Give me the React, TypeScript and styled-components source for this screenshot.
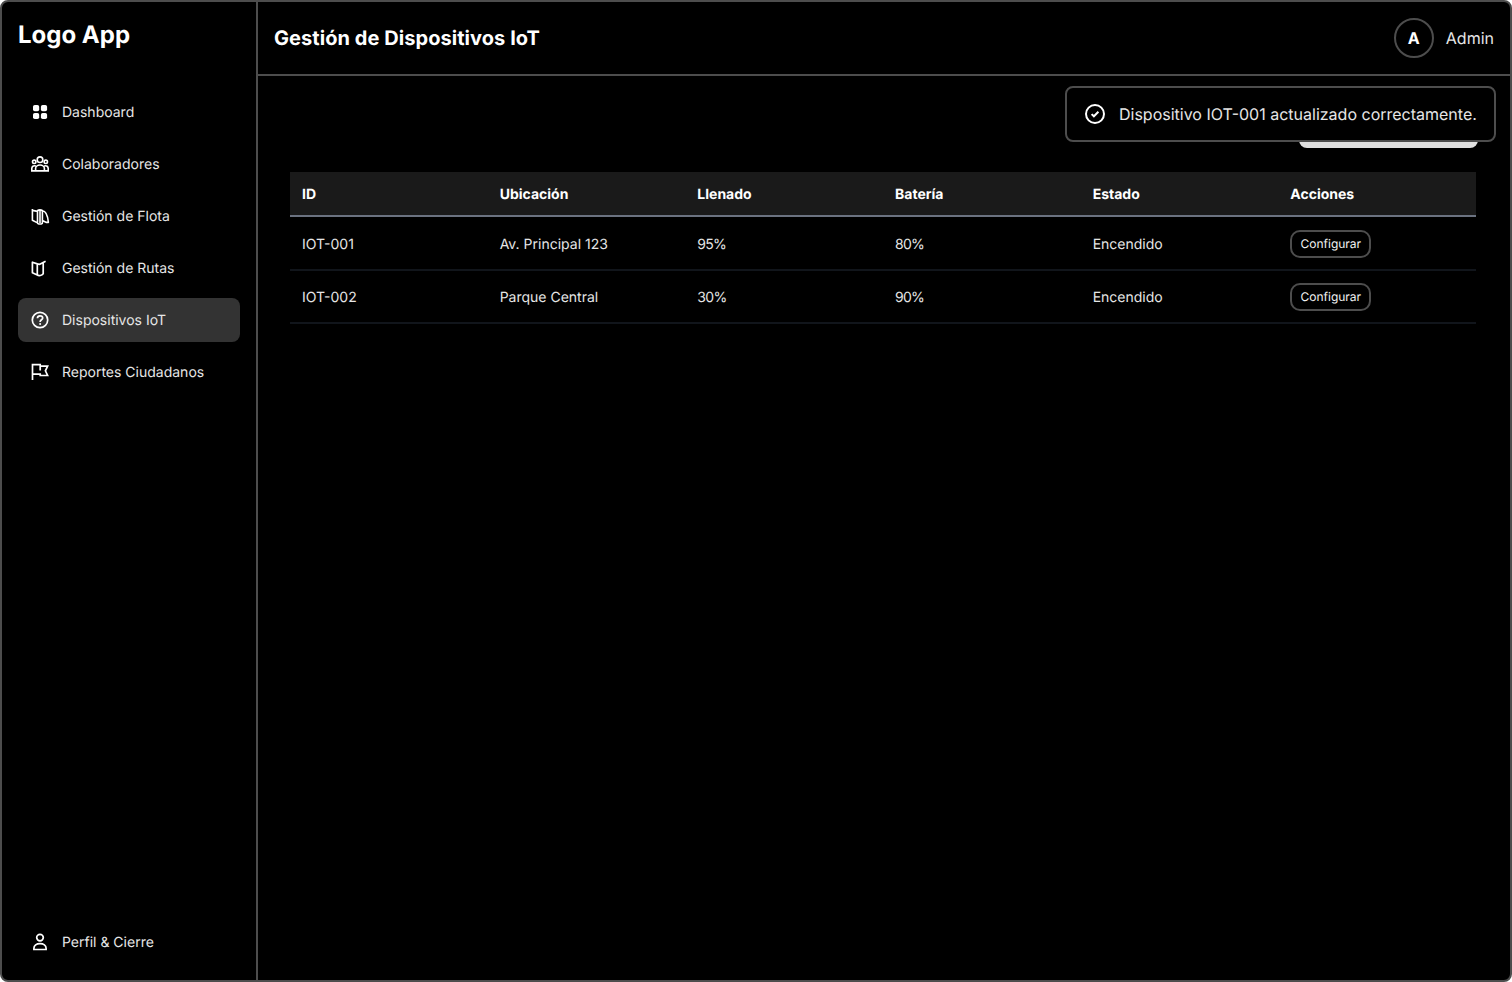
import React from "react";
import styled, { createGlobalStyle } from "styled-components";

const GlobalStyle = createGlobalStyle`
  *, *::before, *::after { box-sizing: border-box; }
  html, body { margin: 0; background: #fff; }
  body {
    font-family: Inter, "Liberation Sans", sans-serif;
    color: #fff;
    text-rendering: geometricPrecision;
    -webkit-font-smoothing: antialiased;
  }
`;

const line = "#4d4d4d";

const Shell = styled.div`
  position: relative;
  display: flex;
  width: 1512px;
  height: 982px;
  border: 2px solid ${line};
  border-radius: 8px;
  background: #000;
  overflow: hidden;
`;

const Sidebar = styled.aside`
  flex: none;
  display: flex;
  flex-direction: column;
  width: 256px;
  padding: 16px;
  border-right: 2px solid ${line};
`;

const Logo = styled.div`
  height: 72px;
  font-size: 24px;
  line-height: 34px;
  font-weight: 700;
`;

const Nav = styled.nav`
  flex: 1;
  display: flex;
  flex-direction: column;
  gap: 8px;
`;

const NavItem = styled.a<{ $active?: boolean }>`
  display: flex;
  align-items: center;
  gap: 12px;
  height: 44px;
  padding: 0 12px;
  border-radius: 8px;
  background: ${(p) => (p.$active ? "#333" : "transparent")};
  color: #e6e6e6;
  font-size: 14px;
  line-height: 21px;
  white-space: nowrap;
`;

const Icon = styled.svg`
  flex: none;
  width: 20px;
  height: 20px;
  fill: none;
  stroke: #fff;
  stroke-width: 1.7;
`;

const Main = styled.main`
  flex: 1;
  display: flex;
  flex-direction: column;
  min-width: 0;
`;

const Header = styled.header`
  display: flex;
  align-items: center;
  justify-content: space-between;
  height: 74px;
  padding: 0 16px;
  border-bottom: 2px solid ${line};
`;

const Title = styled.h1`
  margin: 0;
  font-size: 20px;
  line-height: 28px;
  font-weight: 700;
  letter-spacing: 0.06px;
`;

const User = styled.div`
  display: flex;
  align-items: center;
  gap: 12px;
  color: #e6e6e6;
  font-size: 16px;
  line-height: 24px;
`;

const Avatar = styled.span`
  display: flex;
  align-items: center;
  justify-content: center;
  width: 40px;
  height: 40px;
  border: 2px solid ${line};
  border-radius: 50%;
  color: #fff;
  font-weight: 700;
`;

const Content = styled.section`
  display: flex;
  flex-direction: column;
  gap: 24px;
  padding: 32px 34px 32px 32px;
`;

const Actions = styled.div`
  display: flex;
  justify-content: flex-end;
  margin-right: -2px;
`;

const AddButton = styled.button`
  width: 179px;
  height: 40px;
  border: 0;
  border-radius: 8px;
  background: #e0e0e0;
`;

const Table = styled.div`
  display: flex;
  flex-direction: column;
  font-size: 14px;
  line-height: 21px;
`;

const HeadRow = styled.div`
  display: grid;
  grid-template-columns: repeat(6, 1fr);
  align-items: center;
  height: 45px;
  padding-top: 1px;
  border-bottom: 2px solid #6b7280;
  background: #1a1a1a;
  font-weight: 700;
`;

const Row = styled.div<{ $first?: boolean }>`
  display: grid;
  grid-template-columns: repeat(6, 1fr);
  align-items: center;
  padding: ${(p) => (p.$first ? 13 : 12)}px 0 11px;
  border-bottom: 2px solid #11151b;
  color: #e6e6e6;
`;

const Cell = styled.div<{ $tight?: boolean }>`
  display: flex;
  padding: 0 12px;
  letter-spacing: ${(p) => (p.$tight ? "-0.7px" : "normal")};
`;

const ConfigButton = styled.button`
  width: 81px;
  height: 28px;
  padding: 0;
  border: 2px solid ${line};
  border-radius: 10px;
  background: #000;
  color: #f2f2f2;
  font: 400 12px/16px Inter, "Liberation Sans", sans-serif;
  text-rendering: geometricPrecision;
`;

const Toast = styled.div`
  position: absolute;
  top: 84px;
  right: 14px;
  display: flex;
  align-items: center;
  gap: 12px;
  width: 431px;
  height: 56px;
  padding: 0 16px;
  border: 2px solid ${line};
  border-radius: 8px;
  background: #000;
  color: #e6e6e6;
  font-size: 16px;
  line-height: 24px;
  white-space: nowrap;
`;

const ToastIcon = styled(Icon)`
  width: 24px;
  height: 24px;
  stroke-width: 2;
`;

const icons = {
  dashboard: (
    <g fill="#fff" stroke="none">
      <rect x="3" y="3" width="6.2" height="6.2" rx="1.8" />
      <rect x="10.9" y="3" width="6.2" height="6.2" rx="1.8" />
      <rect x="3" y="10.9" width="6.2" height="6.2" rx="1.8" />
      <rect x="10.9" y="10.9" width="6.2" height="6.2" rx="1.8" />
    </g>
  ),
  people: (
    <g strokeWidth="1.6">
      <circle cx="10" cy="5.7" r="2.8" />
      <circle cx="4.2" cy="7.8" r="1.7" />
      <circle cx="15.8" cy="7.8" r="1.7" />
      <path d="M5.6 16.9v-2.3a4.4 3.6 0 0 1 8.8 0v2.3M5.8 12c-2.5-.7-4 .5-4 2.5v2.4h16.4v-2.4c0-2-1.5-3.2-4-2.5" />
    </g>
  ),
  fleet: (
    <path
      strokeWidth="1.6"
      strokeLinejoin="round"
      d="M2.4 2.9v11.3l5.1 2.7V5.4L2.4 4.4M7.5 5.4c0-2 4.9-2 4.9 0v11.3c0 1.8-4.9 1.8-4.9 0M10 4v13M12.4 4.8c3 .2 5.3 4.6 6 11.6h-2l-4-1.8"
    />
  ),
  routes: (
    <path
      strokeWidth="1.7"
      strokeLinejoin="round"
      d="M2.4 4.2v10.6l4.9 2.3V5.9L2.4 4.2ZM7.3 5.9l2.5.4 5.8-3M7.3 17.1c1.5.9 4.5.6 5.9-1.3V5"
    />
  ),
  help: (
    <>
      <circle cx="10" cy="10" r="7.7" />
      <path d="M7.4 8.2C7.5 6.7 8.5 5.9 10 5.9s2.7.8 2.7 2.1c0 1.7-2.6 1.9-2.6 3.9" />
      <circle cx="10.1" cy="13.9" r="1" fill="#fff" stroke="none" />
    </>
  ),
  flag: <path d="M2.5 18V2.6h7.7v1.5h7.4l-2.2 4.7 2.2 4.7h-7.4v-1.4H2.5M10.2 4v4.4" />,
  person: (
    <>
      <circle cx="10" cy="5.6" r="3.3" />
      <path d="M3.9 17.5v-1.2c0-2.8 2.6-4.7 6.1-4.7s6.1 1.9 6.1 4.7v1.2Z" />
    </>
  ),
};

type IconName = keyof typeof icons;

const Glyph = ({ name }: { name: IconName }) => <Icon viewBox="0 0 20 20">{icons[name]}</Icon>;

const links: [IconName, string][] = [
  ["dashboard", "Dashboard"],
  ["people", "Colaboradores"],
  ["fleet", "Gestión de Flota"],
  ["routes", "Gestión de Rutas"],
  ["help", "Dispositivos IoT"],
  ["flag", "Reportes Ciudadanos"],
];

const columns = ["ID", "Ubicación", "Llenado", "Batería", "Estado", "Acciones"];

const devices = [
  ["IOT-001", "Av. Principal 123", "95%", "80%", "Encendido"],
  ["IOT-002", "Parque Central", "30%", "90%", "Encendido"],
];

export default function App() {
  return (
    <>
      <GlobalStyle />
      <Shell>
        <Sidebar>
          <Logo>Logo App</Logo>
          <Nav>
            {links.map(([icon, label]) => (
              <NavItem key={label} $active={icon === "help"}>
                <Glyph name={icon} />
                {label}
              </NavItem>
            ))}
          </Nav>
          <NavItem>
            <Glyph name="person" />
            Perfil &amp; Cierre
          </NavItem>
        </Sidebar>
        <Main>
          <Header>
            <Title>Gestión de Dispositivos IoT</Title>
            <User>
              <Avatar>A</Avatar>
              Admin
            </User>
          </Header>
          <Content>
            <Actions>
              <AddButton />
            </Actions>
            <Table>
              <HeadRow>
                {columns.map((c) => (
                  <Cell key={c}>{c}</Cell>
                ))}
              </HeadRow>
              {devices.map((device, i) => (
                <Row key={device[0]} $first={i === 0}>
                  {device.map((value) => (
                    <Cell key={value} $tight={value.endsWith("%")}>
                      {value}
                    </Cell>
                  ))}
                  <Cell>
                    <ConfigButton>Configurar</ConfigButton>
                  </Cell>
                </Row>
              ))}
            </Table>
          </Content>
        </Main>
        <Toast>
          <ToastIcon viewBox="0 0 24 24">
            <circle cx="12" cy="12" r="9" />
            <path d="m8.6 12.1 2.3 2.2 4.5-4.5" />
          </ToastIcon>
          Dispositivo IOT-001 actualizado correctamente.
        </Toast>
      </Shell>
    </>
  );
}
